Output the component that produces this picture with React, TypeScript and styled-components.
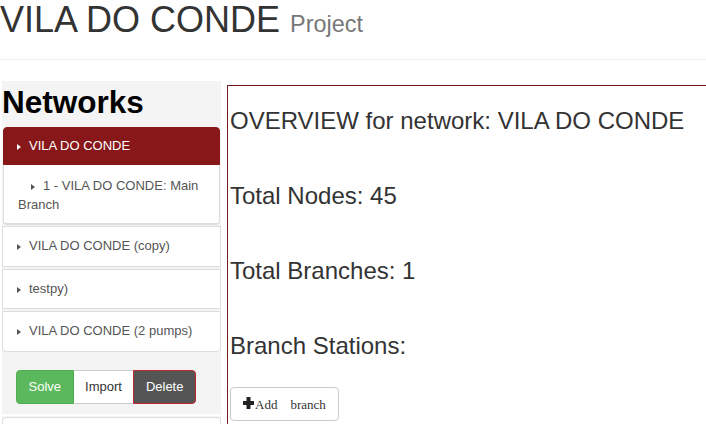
import React from "react";
import styled, { createGlobalStyle } from "styled-components";

const Global = createGlobalStyle`
  html, body { margin: 0; padding: 0; background: #fff; overflow: hidden; }
  body { font-family: "Liberation Sans", Arial, Helvetica, sans-serif; color: #333; }
  * { box-sizing: border-box; }
`;

const Page = styled.div`
  width: 706px;
  height: 424px;
  overflow: hidden;
`;

const Title = styled.h1`
  margin: 0;
  font-size: 36px;
  line-height: 1.1;
  font-weight: normal;
  color: #333;
  white-space: nowrap;
`;

const Sub = styled.small`
  font-size: 65%;
  color: #777;
`;

const Rule = styled.hr`
  margin: 19px 0 0;
  border: 0;
  border-top: 1px solid #eee;
  height: 0;
`;

const Row = styled.div`
  display: flex;
  align-items: flex-start;
  margin-top: 21px;
`;

const Sidebar = styled.aside`
  margin-left: 2px;
  width: 219px;
  flex: none;
  background: #f4f4f4;
  padding-top: 4px;
  min-height: 400px;
`;

const SideTitle = styled.h1`
  margin: 0 0 7px 0;
  font-size: 31.5px;
  line-height: 35px;
  font-weight: bold;
  color: #000;
`;

const Caret = styled.span<{ $light?: boolean }>`
  display: inline-block;
  width: 0;
  height: 0;
  border-left: 4px solid ${(p) => (p.$light ? "#fff" : "#555")};
  border-top: 3.5px solid transparent;
  border-bottom: 3.5px solid transparent;
  margin-right: 8px;
  vertical-align: 0px;
`;

const ActivePanel = styled.div`
  margin: 0 1px 1px;
  background: #fff;
  border-radius: 4px;
`;

const ActiveHeading = styled.div`
  background: #871719;
  color: #fff;
  border: 1px solid #871719;
  border-radius: 4px 4px 0 0;
  padding: 9px 13px;
  font-size: 13px;
  line-height: 1.42857;
`;

const SubBody = styled.div`
  border: 1px solid #ddd;
  border-top: none;
  border-bottom: 2px solid #ddd;
  border-radius: 0 0 4px 4px;
  padding: 11px 14px 9px;
  font-size: 13px;
  line-height: 19px;
  color: #555;
`;

const SubLead = styled.span`
  display: inline-block;
  width: 13px;
`;

const Item = styled.div<{ $last?: boolean }>`
  background: #fff;
  border: 1px solid #ddd;
  border-radius: ${(p) => (p.$last ? "0 0 4px 4px" : "0")};
  margin-bottom: ${(p) => (p.$last ? "0" : "2px")};
  padding: 10px 14px;
  font-size: 13px;
  line-height: 1.42857;
  color: #555;
`;

const Actions = styled.div`
  padding: 18px 14px 10px;
  border-bottom: 2px solid #fff;
`;

const Group = styled.div`
  display: inline-flex;
`;

const Btn = styled.button<{ $kind: "solve" | "import" | "delete" }>`
  font-family: "Liberation Sans", Arial, Helvetica, sans-serif;
  font-size: 13px;
  line-height: 18.5px;
  padding: 7px 11.5px 7px;
  margin: 0;
  border: 1px solid;
  cursor: pointer;
  ${(p) =>
    p.$kind === "solve"
      ? `background:#5cb85c;border-color:#4cae4c;color:#fff;border-radius:4px 0 0 4px;`
      : p.$kind === "import"
      ? `background:#fff;border-color:#ccc;color:#333;border-left:none;border-right:none;`
      : `background:#555;border-color:#c0282d;color:#fff;border-radius:0 4px 4px 0;`}
`;

const LowerBox = styled.div`
  margin-top: 1px;
  height: 40px;
  background: #fff;
  border: 1px solid #ddd;
  border-radius: 4px;
`;

const Panel = styled.section`
  margin-left: 6px;
  margin-top: 4px;
  width: 520px;
  flex: none;
  min-height: 400px;
  border: 1px solid #731c1c;
  padding: 21px 0 0 2px;
`;

const Stat = styled.h3<{ $tight?: boolean }>`
  margin: 0 0 ${(p) => (p.$tight ? "28px" : "48px")};
  font-size: 24px;
  line-height: 27px;
  font-weight: normal;
  color: #333;
  white-space: nowrap;
`;

const AddButton = styled.button`
  display: inline-block;
  font-family: "Liberation Serif", "Times New Roman", serif;
  font-size: 13px;
  line-height: 20px;
  padding: 7px 12px 5px;
  background: #fff;
  border: 1px solid #ccc;
  border-radius: 4px;
  color: #333;
  margin: 0;
`;

const PlusIcon = styled.svg`
  display: inline-block;
  vertical-align: baseline;
  margin-right: 1px;
`;

const Gap = styled.span`
  margin-left: 13px;
`;

export default function App() {
  return (
    <Page>
      <Global />
      <Title>
        VILA DO CONDE <Sub>Project</Sub>
      </Title>
      <Rule />
      <Row>
        <Sidebar>
          <SideTitle>Networks</SideTitle>
          <ActivePanel>
            <ActiveHeading>
              <Caret $light />
              VILA DO CONDE
            </ActiveHeading>
            <SubBody>
              <SubLead />
              <Caret />1 - VILA DO CONDE: Main Branch
            </SubBody>
          </ActivePanel>
          <Item>
            <Caret />
            VILA DO CONDE (copy)
          </Item>
          <Item>
            <Caret />
            testpy)
          </Item>
          <Item $last>
            <Caret />
            VILA DO CONDE (2 pumps)
          </Item>
          <Actions>
            <Group>
              <Btn $kind="solve">Solve</Btn>
              <Btn $kind="import">Import</Btn>
              <Btn $kind="delete">Delete</Btn>
            </Group>
          </Actions>
          <LowerBox />
        </Sidebar>
        <Panel>
          <Stat>OVERVIEW for network: VILA DO CONDE</Stat>
          <Stat>Total Nodes: 45</Stat>
          <Stat>Total Branches: 1</Stat>
          <Stat $tight>Branch Stations:</Stat>
          <AddButton>
            <PlusIcon width="11" height="12" viewBox="0 0 11 12">
              <rect x="3.5" y="0" width="4" height="12" fill="#222" />
              <rect x="0" y="4" width="11" height="4" fill="#222" />
            </PlusIcon>
            Add<Gap>branch</Gap>
          </AddButton>
        </Panel>
      </Row>
    </Page>
  );
}
